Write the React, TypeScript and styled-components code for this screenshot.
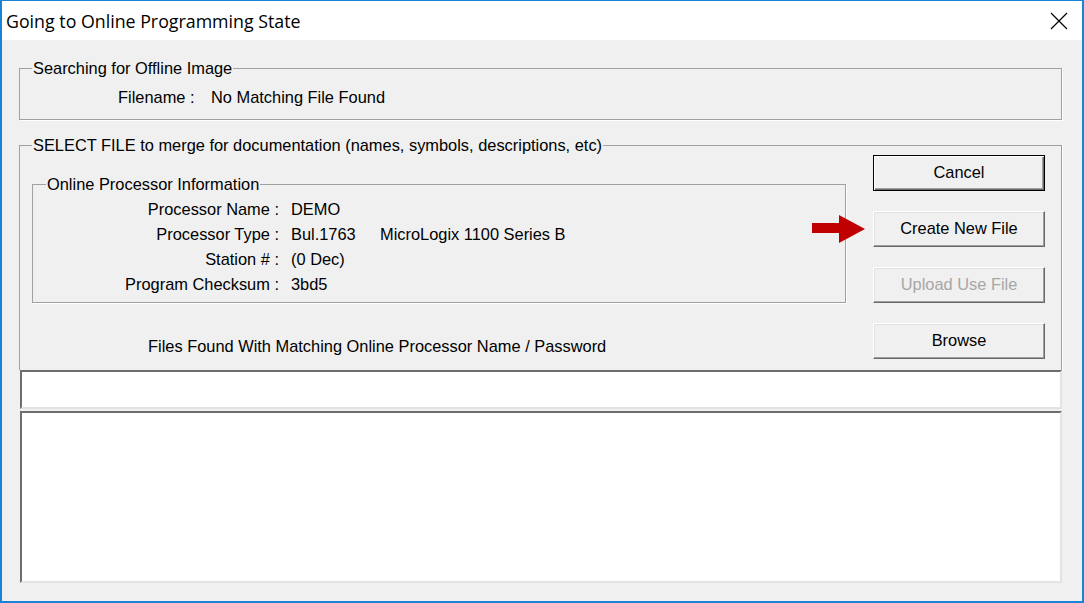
import React from "react";
import styled, { createGlobalStyle } from "styled-components";

const GlobalStyle = createGlobalStyle`
    html, body {
        margin: 0;
        padding: 0;
        background: #f0f0f0;
    }
`;

const Window = styled.div`
    box-sizing: border-box;
    width: 1084px;
    height: 603px;
    border: 2px solid #1883d7;
    border-top-width: 1px;
    background: #f0f0f0;
    display: flex;
    flex-direction: column;
    color: #000;
    font-family: "Liberation Sans", Arial, sans-serif;
    font-size: 16.4px;
`;

const TitleBar = styled.div`
    flex: none;
    height: 39px;
    background: #fff;
    display: flex;
    align-items: center;
    justify-content: space-between;
    padding: 0 14px 0 4px;
`;

const Title = styled.h1`
    margin: 0;
    font-family: "Open Sans", "Noto Sans", sans-serif;
    font-size: 17.8px;
    font-weight: 400;
    color: #000;
`;

const CloseButton = styled.button`
    border: 0;
    background: none;
    padding: 0;
    width: 18px;
    height: 18px;
    display: flex;
`;

const Body = styled.div`
    flex: 1;
    display: flex;
    flex-direction: column;
    padding: 19px 20px 18px 17px;
`;

const GroupBox = styled.fieldset<{ $open?: boolean }>`
    margin: 0;
    min-width: 0;
    border: 1px solid #a0a0a0;
    border-bottom-width: ${(p) => (p.$open ? 0 : 1)}px;
    box-shadow: 1px ${(p) => (p.$open ? 0 : 1)}px 0 #fff;
    padding: 0 16px 0 12px;
`;

const Legend = styled.legend`
    padding: 0 1px;
    line-height: 18px;
`;

const FileRow = styled.div`
    display: flex;
    align-items: center;
    height: 25px;
    margin: 8px 0 9px 86px;
`;

const FileLabel = styled.span`
    width: 93px;
`;

const SelectGroup = styled(GroupBox)`
    margin-top: 16px;
    padding: 0 16px 11px 12px;
`;

const SelectLayout = styled.div`
    display: grid;
    grid-template-columns: 814px 172px;
    column-gap: 27px;
    align-items: start;
`;

const LeftColumn = styled.div`
    margin-top: 21px;
    display: flex;
    flex-direction: column;
`;

const InfoGroup = styled(GroupBox)`
    padding: 4px 12px 5px 13px;
`;

const InfoGrid = styled.div`
    display: grid;
    grid-template-columns: 233px auto;
    column-gap: 12px;
    grid-auto-rows: 25px;
    align-items: center;
`;

const InfoLabel = styled.span`
    text-align: right;
`;

const InfoValue = styled.span`
    display: flex;
`;

const ValuePart = styled.span`
    min-width: 89px;
`;

const Hint = styled.p`
    margin: 34px 0 0 116px;
    line-height: 18px;
`;

const ButtonColumn = styled.div`
    position: relative;
    margin-top: 1px;
    display: flex;
    flex-direction: column;
    gap: 20px;
`;

const Button = styled.button<{ $default?: boolean }>`
    height: 36px;
    font-family: "Liberation Sans", Arial, sans-serif;
    font-size: 16.4px;
    color: #000;
    background: #f0f0f0;
    border: 1px solid;
    border-color: ${(p) => (p.$default ? "#000" : "#fff #696969 #696969 #fff")};
    box-shadow: ${(p) =>
        p.$default
            ? "inset 1px 1px #fff, inset -1px -1px #696969, inset -2px -2px #a0a0a0"
            : "inset -1px -1px #a0a0a0, inset 1px 1px #e3e3e3"};
    padding: 0 0 2px;

    &:disabled {
        color: #a6a6a6;
    }
`;

/* the red annotation arrow lies over the group border, so it is placed over the layout */
const ArrowMark = styled.svg`
    position: absolute;
    left: -61px;
    top: 60px;
`;

const EditField = styled.div`
    flex: none;
    height: 39px;
    margin-left: 1px;
    box-sizing: border-box;
    background: #fff;
    border: 2px solid;
    border-color: #6d6d6d #e3e3e3 #e3e3e3 #6d6d6d;
`;

const ListBox = styled(EditField)`
    flex: 1;
    margin-top: 2px;
`;

const info: [string, React.ReactNode][] = [
    ["Processor Name :", "DEMO"],
    [
        "Processor Type :",
        <>
            <ValuePart>Bul.1763</ValuePart>
            <span>MicroLogix 1100 Series B</span>
        </>,
    ],
    ["Station # :", "(0 Dec)"],
    ["Program Checksum :", "3bd5"],
];

export default function App() {
    return (
        <>
            <GlobalStyle />
            <Window>
                <TitleBar>
                    <Title>Going to Online Programming State</Title>
                    <CloseButton aria-label="Close">
                        <svg width="18" height="18" viewBox="0 0 18 18">
                            <path
                                d="M1 1 L17 17 M17 1 L1 17"
                                stroke="#000"
                                strokeWidth="1.2"
                            />
                        </svg>
                    </CloseButton>
                </TitleBar>
                <Body>
                    <GroupBox>
                        <Legend>Searching for Offline Image</Legend>
                        <FileRow>
                            <FileLabel>Filename :</FileLabel>
                            <span>No Matching File Found</span>
                        </FileRow>
                    </GroupBox>
                    <SelectGroup $open>
                        <Legend>
                            SELECT FILE to merge for documentation (names,
                            symbols, descriptions, etc)
                        </Legend>
                        <SelectLayout>
                            <LeftColumn>
                                <InfoGroup>
                                    <Legend>Online Processor Information</Legend>
                                    <InfoGrid>
                                        {info.map(([label, value]) => (
                                            <React.Fragment key={label}>
                                                <InfoLabel>{label}</InfoLabel>
                                                <InfoValue>{value}</InfoValue>
                                            </React.Fragment>
                                        ))}
                                    </InfoGrid>
                                </InfoGroup>
                                <Hint>
                                    Files Found With Matching Online Processor
                                    Name / Password
                                </Hint>
                            </LeftColumn>
                            <ButtonColumn>
                                <Button $default>Cancel</Button>
                                <Button>Create New File</Button>
                                <Button disabled>Upload Use File</Button>
                                <Button>Browse</Button>
                                <ArrowMark
                                    width="53"
                                    height="28"
                                    viewBox="0 0 53 28"
                                >
                                    <path
                                        d="M0 8 H27 V0 L53 14 L27 28 V18 H0 Z"
                                        fill="#c00000"
                                    />
                                </ArrowMark>
                            </ButtonColumn>
                        </SelectLayout>
                    </SelectGroup>
                    <EditField />
                    <ListBox />
                </Body>
            </Window>
        </>
    );
}
